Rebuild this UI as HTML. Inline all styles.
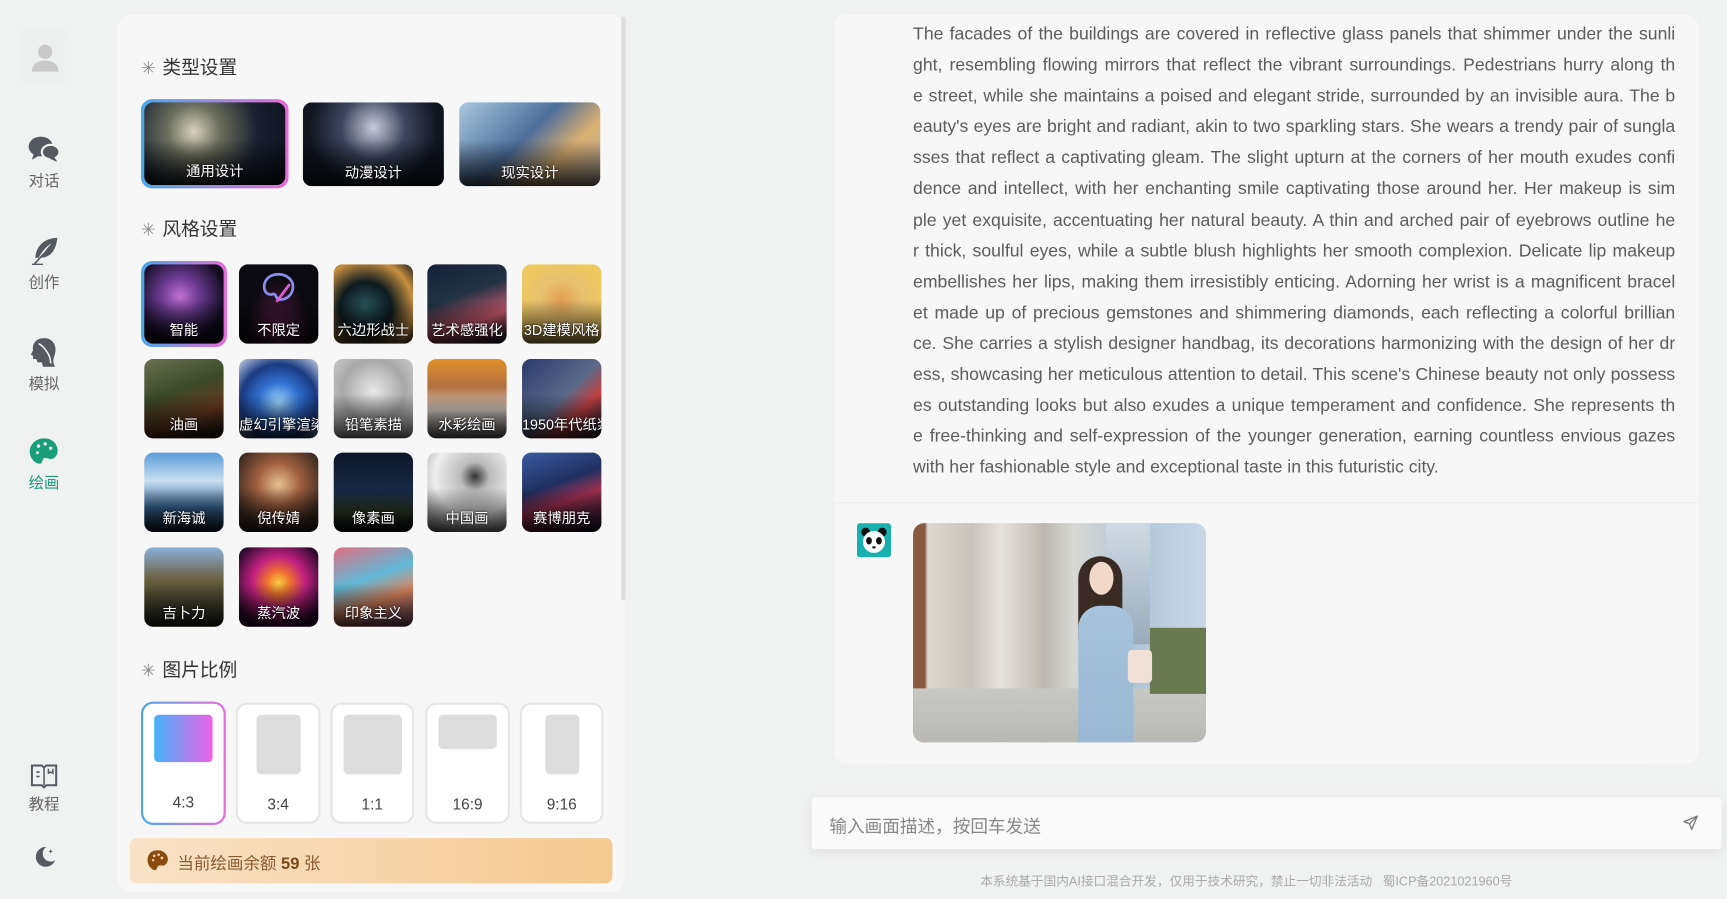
<!DOCTYPE html>
<html><head><meta charset="utf-8">
<style>
*{box-sizing:border-box;margin:0;padding:0}
html,body{width:1727px;height:899px;overflow:hidden;background:#f0f1f1}
#root{position:absolute;left:0;top:0;width:1568px;height:816px;transform:scale(1.10140);transform-origin:0 0;font-family:"Liberation Sans","Noto Sans CJK SC",sans-serif;}
.abs{position:absolute}
.nav{position:absolute;left:0;width:80px;text-align:center;font-size:14px;color:#666}
.nav svg{display:block;margin:0 auto 4px}
.panel{position:absolute;left:107px;top:13px;width:460px;height:797px;background:#f7f7f7;border-radius:12px}
.h{position:absolute;left:128px;font-size:17px;color:#333}
.h span{color:#888;margin-right:6px;font-size:16px}
.t{position:absolute;border-radius:8px;overflow:hidden;color:#fff;font-size:13px;text-align:center}
.t i{position:absolute;left:0;right:0;bottom:0;height:55%;background:linear-gradient(transparent,rgba(0,0,0,.85))}
.t b{position:absolute;left:0;right:0;bottom:4px;font-weight:normal;white-space:nowrap;overflow:hidden;text-shadow:0 0 2px #000}
.sel{box-shadow:0 0 0 3px #f7f7f7,0 0 0 5px transparent}
.r{position:absolute;top:638px;height:110px;background:#fff;border:2px solid #e6e6e6;border-radius:10px}
.r .s{position:absolute;background:#ddd;border-radius:4px}
.r p{position:absolute;left:0;right:0;top:82px;text-align:center;font-size:14px;color:#444}
.txt{position:absolute;left:829px;width:692px;font-size:16px;color:#5c5c5c;font-family:"Liberation Sans Narrow","Liberation Sans",sans-serif}
.txt div{height:28.1px;line-height:28px;white-space:nowrap;text-align:justify;text-align-last:justify}
</style></head><body><div id="root">

<!-- sidebar -->
<div class="abs" style="left:18px;top:27px;width:46px;height:50px;background:#eef0f0;border-radius:6px"></div>
<svg class="abs" style="left:27px;top:38px" width="28" height="28" viewBox="0 0 28 28"><circle cx="14" cy="9" r="6.5" fill="#c9c9c9"/><path d="M2 27c0-7 5-10 12-10s12 3 12 10z" fill="#c9c9c9"/></svg>
<div class="nav" style="top:122px"><svg width="30" height="28" viewBox="0 0 30 28"><ellipse cx="12" cy="11" rx="11" ry="9" fill="#555a60"/><path d="M6 17l-2 6 7-4z" fill="#555a60"/><ellipse cx="21" cy="16" rx="8" ry="6.5" fill="#555a60" stroke="#f0f1f1" stroke-width="2"/><path d="M24 20l3 5-7-3z" fill="#555a60"/></svg>对话</div>
<div class="nav" style="top:214px"><svg width="30" height="28" viewBox="0 0 30 28"><path d="M27 2C17 2 8 8 7 20l3 0C14 13 18 9 22 7 18 11 15 15 12 20c8 0 14-6 15-18z" fill="#555a60"/><path d="M6 26l9-10" stroke="#555a60" stroke-width="1.5"/><path d="M4 26h10" stroke="#555a60" stroke-width="1.2"/></svg>创作</div>
<div class="nav" style="top:306px"><svg width="30" height="28" viewBox="0 0 30 28"><path d="M15 1c-7 0-11 5-10 11l-2 4 2 1 0 3 3 0 1 3h4l1 4h11c-3-5-1-8 0-12 2-8-3-14-10-14z" fill="#555a60"/><path d="M10 6c3 1 6 5 8 8s3 7 3 10" stroke="#f0f1f1" stroke-width="1.4" fill="none"/></svg>模拟</div>
<div class="nav" style="top:396px;color:#1a9e7a"><svg width="30" height="28" viewBox="0 0 30 28"><path d="M15 2C7 2 2 8 2 14c0 6 5 11 9 11 3 0 2-4 4-5s5 2 9 0c4-3 4-8 2-12-2-4-6-6-11-6z" fill="#1a9e7a"/><circle cx="10" cy="9" r="1.5" fill="#fff"/><circle cx="16" cy="7" r="1.5" fill="#fff"/><circle cx="21" cy="11" r="1.5" fill="#fff"/><circle cx="9" cy="15" r="1.3" fill="#fff"/></svg>绘画</div>
<div class="nav" style="top:692px"><svg width="30" height="24" viewBox="0 0 30 24"><path d="M4 3h9l2 2 2-2h9v18H17l-2 2-2-2H4z" fill="none" stroke="#555a60" stroke-width="1.8"/><path d="M15 5v16M8 9h3M8 13h3M19 6v4l2-1 2 1V6" stroke="#555a60" stroke-width="1.4" fill="none"/></svg>教程</div>
<svg class="abs" style="left:30px;top:767px" width="22" height="22" viewBox="0 0 22 22"><path d="M12 2a9 9 0 1 0 8 12A7 7 0 0 1 12 2z" fill="#555a60"/><path d="M16 4l.6 1.4 1.4.6-1.4.6-.6 1.4-.6-1.4-1.4-.6 1.4-.6z" fill="#555a60"/></svg>

<!-- panel -->
<div class="panel"></div>
<div class="abs" style="left:564px;top:15px;width:4px;height:530px;background:#ddd;border-radius:2px"></div>
<div class="h" style="top:47px"><span>✳</span>类型设置</div>
<div class="h" style="top:194px"><span>✳</span>风格设置</div>
<div class="h" style="top:594px"><span>✳</span>图片比例</div>

<!-- type cards -->
<div class="abs" style="left:128px;top:90px;width:134px;height:81px;border-radius:10px;background:linear-gradient(90deg,#4aa9e8,#e86ad8)"></div>
<div class="t" style="left:131px;top:93px;width:128px;height:75px;background:radial-gradient(circle at 35% 35%,#d8d0c0 0,#6b6e5c 25%,#1a2030 60%,#0b0f1a 100%)"><i></i><b>通用设计</b></div>
<div class="t" style="left:275px;top:93px;width:128px;height:76px;background:radial-gradient(circle at 50% 30%,#c8ccd8 0,#3d4660 35%,#101520 70%),linear-gradient(90deg,#ddd,#222)"><i></i><b>动漫设计</b></div>
<div class="t" style="left:417px;top:93px;width:128px;height:76px;background:linear-gradient(135deg,#a9c8e0,#4d6e9a 45%,#d9b070 70%,#c0b0a8)"><i></i><b>现实设计</b></div>

<!-- style grid -->
<div class="abs" style="left:128px;top:237px;width:78px;height:78px;border-radius:10px;background:linear-gradient(90deg,#4aa9e8,#e86ad8)"></div>
<div class="t" style="left:131px;top:240px;width:72px;height:72px;background:radial-gradient(circle at 45% 40%,#c070d0 0,#6a3a90 30%,#120c20 70%)"><i></i><b>智能</b></div>
<div class="t" style="left:217px;top:240px;width:72px;height:72px;background:radial-gradient(ellipse at 50% 100%,#6a2050 0,#0a0a10 60%)"><svg class="abs" style="left:18px;top:6px" width="36" height="34" viewBox="0 0 36 34"><path d="M18 3C9 3 4 9 5 16c1 5 5 6 8 5 3-1 2 5 6 5 7 0 12-5 12-12 0-6-6-11-13-11z" fill="none" stroke="#8a8cf0" stroke-width="2.5"/><path d="M16 28l12-16" stroke="#e05ad0" stroke-width="2.5"/></svg><i></i><b>不限定</b></div>
<div class="t" style="left:303px;top:240px;width:72px;height:72px;background:radial-gradient(circle at 40% 55%,#2a5a60 0,#0d1a20 40%,#c89040 75%,#1a1a20)"><i></i><b>六边形战士</b></div>
<div class="t" style="left:388px;top:240px;width:72px;height:72px;background:linear-gradient(160deg,#15203a 0,#234 40%,#d05a70 70%,#1a1a30)"><i></i><b>艺术感强化</b></div>
<div class="t" style="left:474px;top:240px;width:72px;height:72px;background:radial-gradient(circle at 50% 45%,#e0a050 0,#e8c070 35%,#f0c860 70%)"><i></i><b>3D建模风格</b></div>

<div class="t" style="left:131px;top:326px;width:72px;height:72px;background:linear-gradient(160deg,#6a7050,#3a4a28 40%,#6a3a20 70%,#1a1a10)"><i></i><b>油画</b></div>
<div class="t" style="left:217px;top:326px;width:72px;height:72px;background:radial-gradient(circle at 50% 55%,#a0d8ff 0,#3070d0 35%,#1a3a80 65%,#c8d4e8)"><i></i><b>虚幻引擎渲染</b></div>
<div class="t" style="left:303px;top:326px;width:72px;height:72px;background:radial-gradient(circle at 50% 40%,#e8e8e8 0,#a8a8a8 50%,#ddd)"><i></i><b>铅笔素描</b></div>
<div class="t" style="left:388px;top:326px;width:72px;height:72px;background:linear-gradient(180deg,#e0902a 0,#b07040 35%,#d8d0c8 65%,#888)"><i></i><b>水彩绘画</b></div>
<div class="t" style="left:474px;top:326px;width:72px;height:72px;background:linear-gradient(135deg,#2a3a6a,#5a6a8a 50%,#c04040 70%,#1a2a4a)"><i></i><b>1950年代纸浆</b></div>

<div class="t" style="left:131px;top:411px;width:72px;height:72px;background:linear-gradient(180deg,#5a9ad8,#c8e0f0 35%,#3a6a9a 70%,#1a2a40)"><i></i><b>新海诚</b></div>
<div class="t" style="left:217px;top:411px;width:72px;height:72px;background:radial-gradient(circle at 50% 40%,#e8c090 0,#a06040 35%,#3a2a20 75%)"><i></i><b>倪传婧</b></div>
<div class="t" style="left:303px;top:411px;width:72px;height:72px;background:linear-gradient(180deg,#0c1628,#1a2a48 50%,#30402a 75%,#0a0a10)"><i></i><b>像素画</b></div>
<div class="t" style="left:388px;top:411px;width:72px;height:72px;background:radial-gradient(circle at 60% 30%,#333 0,#bbb 20%,#eee 55%,#888)"><i></i><b>中国画</b></div>
<div class="t" style="left:474px;top:411px;width:72px;height:72px;background:linear-gradient(160deg,#3a5aa0,#203060 40%,#a03050 60%,#101830)"><i></i><b>赛博朋克</b></div>

<div class="t" style="left:131px;top:497px;width:72px;height:72px;background:linear-gradient(180deg,#8ab0d8,#6a6040 40%,#4a4a30 70%,#2a3020)"><i></i><b>吉卜力</b></div>
<div class="t" style="left:217px;top:497px;width:72px;height:72px;background:radial-gradient(circle at 50% 45%,#f8d040 0,#f07030 20%,#c02080 45%,#300a30 80%)"><i></i><b>蒸汽波</b></div>
<div class="t" style="left:303px;top:497px;width:72px;height:72px;background:linear-gradient(160deg,#e07080,#60b8d8 40%,#e08860 65%,#8a5a80)"><i></i><b>印象主义</b></div>

<!-- ratios -->
<div class="abs" style="left:128px;top:637px;width:77px;height:112px;border-radius:11px;background:linear-gradient(90deg,#4aa9e8,#e86ad8)"></div>
<div class="r" style="left:130px;top:639px;width:73px;height:108px;border:none;border-radius:9px"><div class="s" style="left:10px;top:10px;width:53px;height:43px;background:linear-gradient(90deg,#45b3fa,#ee60e6)"></div><p style="top:81px">4:3</p></div>
<div class="r" style="left:214px;width:77px"><div class="s" style="left:17px;top:9px;width:40px;height:54px"></div><p>3:4</p></div>
<div class="r" style="left:300px;width:76px"><div class="s" style="left:10px;top:9px;width:53px;height:54px"></div><p>1:1</p></div>
<div class="r" style="left:386px;width:77px"><div class="s" style="left:10px;top:9px;width:53px;height:31px"></div><p>16:9</p></div>
<div class="r" style="left:472px;width:76px"><div class="s" style="left:21px;top:9px;width:31px;height:54px"></div><p>9:16</p></div>

<div class="abs" style="left:118px;top:761px;width:438px;height:41px;border-radius:6px;background:linear-gradient(90deg,#f9e2c6,#f4c990)"></div>
<svg class="abs" style="left:133px;top:771px" width="20" height="20" viewBox="0 0 20 20"><path d="M10 1C4 1 1 5 1 10c0 5 4 9 7 9 2 0 1-3 3-4s4 1 6-1c3-2 3-6 1-9-2-3-5-4-8-4z" fill="#8a4a10"/><circle cx="7" cy="6" r="1.2" fill="#f6d4a8"/><circle cx="11" cy="5" r="1.2" fill="#f6d4a8"/><circle cx="14" cy="8" r="1.2" fill="#f6d4a8"/><circle cx="6" cy="10" r="1.1" fill="#f6d4a8"/></svg>
<div class="abs" style="left:161px;top:773px;font-size:15px;color:#8a5a30">当前绘画余额 <b style="color:#7a4a1a">59</b> 张</div>

<!-- chat -->
<div class="abs" style="left:757px;top:13px;width:785px;height:681px;background:#f7f7f7;border-radius:12px"></div>
<div class="abs" style="left:757px;top:456px;width:785px;height:1px;background:#ececec"></div>
<div class="txt" style="top:18px">
<div>The facades of the buildings are covered in reflective glass panels that shimmer under the sunli</div>
<div>ght, resembling flowing mirrors that reflect the vibrant surroundings. Pedestrians hurry along th</div>
<div>e street, while she maintains a poised and elegant stride, surrounded by an invisible aura. The b</div>
<div>eauty's eyes are bright and radiant, akin to two sparkling stars. She wears a trendy pair of sungla</div>
<div>sses that reflect a captivating gleam. The slight upturn at the corners of her mouth exudes confi</div>
<div>dence and intellect, with her enchanting smile captivating those around her. Her makeup is sim</div>
<div>ple yet exquisite, accentuating her natural beauty. A thin and arched pair of eyebrows outline he</div>
<div>r thick, soulful eyes, while a subtle blush highlights her smooth complexion. Delicate lip makeup</div>
<div>embellishes her lips, making them irresistibly enticing. Adorning her wrist is a magnificent bracel</div>
<div>et made up of precious gemstones and shimmering diamonds, each reflecting a colorful brillian</div>
<div>ce. She carries a stylish designer handbag, its decorations harmonizing with the design of her dr</div>
<div>ess, showcasing her meticulous attention to detail. This scene's Chinese beauty not only possess</div>
<div>es outstanding looks but also exudes a unique temperament and confidence. She represents th</div>
<div>e free-thinking and self-expression of the younger generation, earning countless envious gazes</div>
<div style="text-align-last:left">with her fashionable style and exceptional taste in this futuristic city.</div>
</div>

<svg class="abs" style="left:778px;top:475px" width="31" height="31" viewBox="0 0 31 31"><rect width="31" height="31" rx="3" fill="#19b0b0"/><circle cx="8" cy="8" r="4" fill="#111"/><circle cx="23" cy="8" r="4" fill="#111"/><ellipse cx="15.5" cy="17" rx="10" ry="10" fill="#fff"/><ellipse cx="11" cy="16" rx="2.6" ry="3.4" fill="#111"/><ellipse cx="20" cy="16" rx="2.6" ry="3.4" fill="#111"/><ellipse cx="15.5" cy="22" rx="1.6" ry="1" fill="#111"/></svg>
<div class="abs" style="left:829px;top:475px;width:266px;height:199px;border-radius:10px;overflow:hidden;background:linear-gradient(90deg,#8a5a40 0,#8a5a40 4%,#ddd8d0 5%,#c8c4bc 20%,#e6e2dc 30%,#bcb8b0 45%,#d8d8d4 55%,#b0c4d8 75%,#c8d8e8 100%)">
 <div class="abs" style="left:0;top:150px;width:266px;height:49px;background:linear-gradient(#c8c8c4,#b8b8b4)"></div>
 <div class="abs" style="left:215px;top:95px;width:51px;height:60px;background:#6a7a50"></div>
 <div class="abs" style="left:175px;top:0;width:40px;height:110px;background:linear-gradient(#d0dae4,#9aaaba)"></div>
 <div class="abs" style="left:150px;top:30px;width:40px;height:80px;border-radius:20px 20px 6px 6px;background:#3a2a24"></div>
 <div class="abs" style="left:160px;top:35px;width:22px;height:30px;border-radius:50%;background:#f2d8c8"></div>
 <div class="abs" style="left:150px;top:75px;width:50px;height:124px;border-radius:20px 20px 0 0;background:linear-gradient(#a8c4dc,#98b8d4)"></div>
 <div class="abs" style="left:195px;top:115px;width:22px;height:30px;border-radius:4px;background:#f0e0d8"></div>
</div>

<div class="abs" style="left:737px;top:724px;width:826px;height:47px;background:#fafafa;border-radius:3px;box-shadow:0 2px 10px rgba(0,0,0,.08)"></div>
<div class="abs" style="left:753px;top:737px;font-size:16px;color:#888">输入画面描述，按回车发送</div>
<svg class="abs" style="left:1527px;top:739px" width="16" height="16" viewBox="0 0 16 16"><path d="M14 2L2 7l5 2 2 5z" fill="none" stroke="#777" stroke-width="1.2" stroke-linejoin="round"/><path d="M7 9l7-7" stroke="#777" stroke-width="1.1"/></svg>
<div class="abs" style="left:890px;top:792px;font-size:11.5px;color:#aaa;white-space:nowrap">本系统基于国内AI接口混合开发，仅用于技术研究，禁止一切非法活动 &nbsp;&nbsp;蜀ICP备2021021960号</div>

</div></body></html>
